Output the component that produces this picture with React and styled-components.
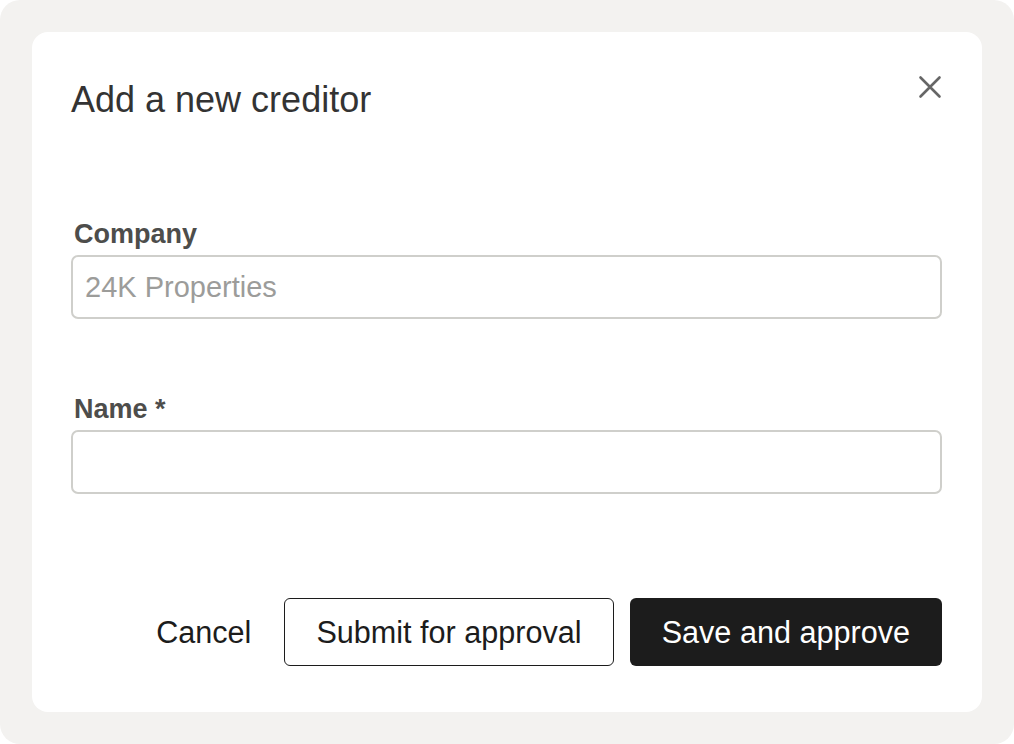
import styled, { createGlobalStyle } from "styled-components";

const GlobalStyle = createGlobalStyle`
  html, body {
    margin: 0;
    padding: 0;
    background: #ffffff;
  }
  body {
    font-family: "Liberation Sans", Arial, Helvetica, sans-serif;
  }
`;

const Backdrop = styled.div`
  width: 1014px;
  height: 744px;
  box-sizing: border-box;
  padding: 32px;
  background: #f3f2f0;
  border-radius: 20px;
`;

const Card = styled.div`
  height: 680px;
  box-sizing: border-box;
  padding: 47px 40px 46px 39px;
  background: #ffffff;
  border-radius: 16px;
  display: flex;
  flex-direction: column;
`;

const Header = styled.div`
  display: flex;
  justify-content: space-between;
  align-items: flex-start;
  margin-bottom: 98px;
`;

const Title = styled.h2`
  margin: 0;
  font-size: 36px;
  line-height: 42px;
  font-weight: 400;
  color: #333333;
`;

const CloseButton = styled.button`
  width: 24px;
  height: 24px;
  margin-top: -4px;
  padding: 0;
  border: 0;
  background: none;
  color: #666666;
  cursor: pointer;
  display: flex;
`;

const Field = styled.div`
  display: flex;
  flex-direction: column;
  margin-bottom: ${(p) => p.$gap}px;
`;

const Label = styled.label`
  font-size: 27px;
  line-height: 30px;
  font-weight: 700;
  color: #4d4d4b;
  margin: 0 0 6px 3px;
`;

const Input = styled.input`
  height: 64px;
  box-sizing: border-box;
  padding: 0 12px;
  border: 2px solid #cfcfcb;
  border-radius: 7px;
  font-family: inherit;
  font-size: 29px;
  color: #333;
  outline: none;
  &::placeholder {
    color: #9c9c9a;
  }
`;

const Actions = styled.div`
  display: flex;
  justify-content: flex-end;
  align-items: center;
  gap: 16px;
`;

const Button = styled.button`
  height: 68px;
  box-sizing: border-box;
  padding: 0 ${(p) => (p.$variant === "text" ? 16 : 31)}px;
  border-radius: 6px;
  font-family: inherit;
  font-size: 30.6px;
  cursor: pointer;
  border: ${(p) =>
    p.$variant === "outline" ? "1.5px solid #1c1c1c" : "1.5px solid transparent"};
  background: ${(p) => (p.$variant === "primary" ? "#1c1c1c" : "#ffffff")};
  color: ${(p) => (p.$variant === "primary" ? "#ffffff" : "#1c1c1c")};
`;

export default function App() {
  return (
    <>
      <GlobalStyle />
      <Backdrop>
        <Card>
          <Header>
            <Title>Add a new creditor</Title>
            <CloseButton aria-label="Close">
              <svg width="24" height="24" viewBox="0 0 24 24">
                <path
                  d="M2.5 2.5 L21.5 21.5 M21.5 2.5 L2.5 21.5"
                  stroke="currentColor"
                  strokeWidth="2.6"
                  strokeLinecap="round"
                />
              </svg>
            </CloseButton>
          </Header>
          <Field $gap={75}>
            <Label>Company</Label>
            <Input placeholder="24K Properties" />
          </Field>
          <Field $gap={104}>
            <Label>Name *</Label>
            <Input />
          </Field>
          <Actions>
            <Button $variant="text">Cancel</Button>
            <Button $variant="outline">Submit for approval</Button>
            <Button $variant="primary">Save and approve</Button>
          </Actions>
        </Card>
      </Backdrop>
    </>
  );
}
